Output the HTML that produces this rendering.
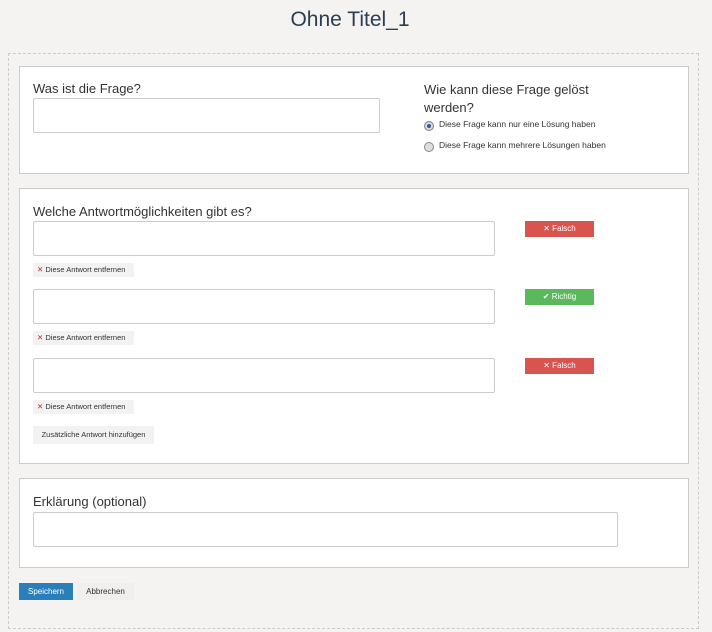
<!DOCTYPE html>
<html><head><meta charset="utf-8"><style>
*{box-sizing:border-box;margin:0;padding:0}
body{width:712px;height:632px;background:#f4f3f2;font-family:"Liberation Sans",sans-serif;color:#333;position:relative;overflow:hidden}
.a{position:absolute}
.title{left:0;width:700px;top:8px;text-align:center;font-size:21px;color:#2c3e50}
.dash{left:8px;top:53px;width:691px;height:576px;border:1px dashed #ccc}
.panel{background:#fff;border:1px solid #ccc;left:19px;width:670px}
.lbl{font-size:13px;color:#333}
.inp{background:#fff;border:1px solid #ccc;border-radius:2px}
.small{font-size:8.5px;color:#333}
.rm{left:33px;width:101px;height:14px;background:#f2f2f2;font-size:7.5px;color:#333;line-height:14px;padding-left:4px}
.rm b{color:#a33;font-weight:normal}
.bad{left:525px;width:69px;height:16px;color:#fff;font-size:8px;text-align:center;line-height:16px}
.radio{width:10px;height:10px;border-radius:50%;border:1px solid #888;background:#ddd}
</style></head><body>
<div class="a title">Ohne Titel_1</div>
<div class="a dash"></div>
<div class="a panel" style="top:66px;height:108px"></div>
<div class="a lbl" style="left:33px;top:81px">Was ist die Frage?</div>
<div class="a inp" style="left:33px;top:98px;width:347px;height:35px"></div>
<div class="a lbl" style="left:424px;top:81px;line-height:18px">Wie kann diese Frage gelöst<br>werden?</div>
<div class="a radio" style="left:424px;top:121px;background:#1f5d9e;box-shadow:inset 0 0 0 2px #ddd"></div>
<div class="a small" style="left:439px;top:119px">Diese Frage kann nur eine Lösung haben</div>
<div class="a radio" style="left:424px;top:142px"></div>
<div class="a small" style="left:439px;top:140px">Diese Frage kann mehrere Lösungen haben</div>

<div class="a panel" style="top:188px;height:276px"></div>
<div class="a lbl" style="left:33px;top:204px">Welche Antwortmöglichkeiten gibt es?</div>
<div class="a inp" style="left:33px;top:221px;width:462px;height:35px"></div>
<div class="a rm" style="top:263px"><b>✕</b> Diese Antwort entfernen</div>
<div class="a bad" style="top:221px;background:#d9534f">✕ Falsch</div>
<div class="a inp" style="left:33px;top:289px;width:462px;height:35px"></div>
<div class="a rm" style="top:331px"><b>✕</b> Diese Antwort entfernen</div>
<div class="a bad" style="top:289px;background:#5cb85c">✔ Richtig</div>
<div class="a inp" style="left:33px;top:358px;width:462px;height:35px"></div>
<div class="a rm" style="top:400px"><b>✕</b> Diese Antwort entfernen</div>
<div class="a bad" style="top:358px;background:#d9534f">✕ Falsch</div>
<div class="a" style="left:33px;top:426px;width:121px;height:18px;background:#f2f2f2;font-size:7.5px;line-height:18px;text-align:center">Zusätzliche Antwort hinzufügen</div>

<div class="a panel" style="top:478px;height:90px"></div>
<div class="a lbl" style="left:33px;top:494px">Erklärung (optional)</div>
<div class="a inp" style="left:33px;top:512px;width:585px;height:35px"></div>

<div class="a" style="left:19px;top:583px;width:54px;height:17px;background:#2a7fba;color:#fff;font-size:8px;line-height:17px;text-align:center">Speichern</div>
<div class="a" style="left:77px;top:583px;width:57px;height:17px;background:#f0efee;color:#333;font-size:8px;line-height:17px;text-align:center">Abbrechen</div>
</body></html>
